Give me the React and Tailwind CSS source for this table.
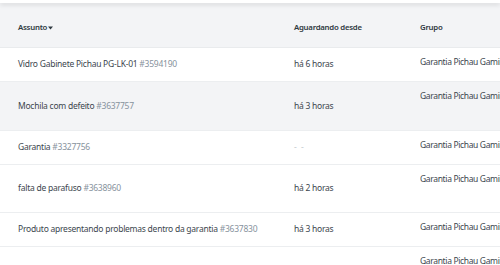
const rows = [
  { t: "Vidro Gabinete Pichau PG-LK-01", id: "#3594190", w: "há 6 horas", h: "h-[34px]", bg: "bg-white" },
  { t: "Mochila com defeito", id: "#3637757", w: "há 3 horas", h: "h-[49px]", bg: "bg-[#f3f4f6]" },
  { t: "Garantia", id: "#3327756", w: null, h: "h-[34px]", bg: "bg-white" },
  { t: "falta de parafuso", id: "#3638960", w: "há 2 horas", h: "h-[48px]", bg: "bg-white" },
  { t: "Produto apresentando problemas dentro da garantia", id: "#3637830", w: "há 3 horas", h: "h-[34px]", bg: "bg-white" },
  { t: "", id: "", w: "", h: "h-[34px]", bg: "bg-white" },
];

function Caret() {
  return (
    <svg width="5" height="4" viewBox="0 0 5 4" className="ml-[1px]">
      <path d="M0 0.5 L5 0.5 L2.5 3.5 Z" fill="#2f3941" />
    </svg>
  );
}

export default function App() {
  return (
    <div className="w-[500px] h-[265px] overflow-hidden bg-white text-[8.5px] tracking-[-0.25px] text-[#3c464e] font-['Noto_Sans',sans-serif]">
      <div className="h-[3px] bg-white relative z-10 shadow-[0_2px_4px_rgba(0,0,0,0.12)]"></div>
      <div className="h-[45px] pt-[6px] bg-[#f3f4f6] flex items-center border-b border-[#e9ebed] text-[7.8px] font-semibold text-[#2f3941]">
        <div className="w-[294px] pl-[18px] flex items-center">
          Assunto<Caret />
        </div>
        <div className="w-[126px]">Aguardando desde</div>
        <div className="flex-1 whitespace-nowrap">Grupo</div>
      </div>
      {rows.map((r, i) => (
        <div key={i} className={`flex border-b border-[#eceef0] ${r.bg} ${r.h}`}>
          <div className="w-[294px] pl-[18px] flex items-center whitespace-nowrap overflow-hidden">
            {r.t && (
              <span>
                {r.t} <span className="text-[#87929d]">{r.id}</span>
              </span>
            )}
          </div>
          <div className="w-[126px] flex items-center whitespace-nowrap">
            {r.w === null ? <span className="text-[#c2c8cc] tracking-[1px]">- -</span> : r.w}
          </div>
          <div className="flex-1 pt-[7px] whitespace-nowrap overflow-hidden leading-[14px] tracking-[-0.35px]">Garantia Pichau Gaming</div>
        </div>
      ))}
    </div>
  );
}
